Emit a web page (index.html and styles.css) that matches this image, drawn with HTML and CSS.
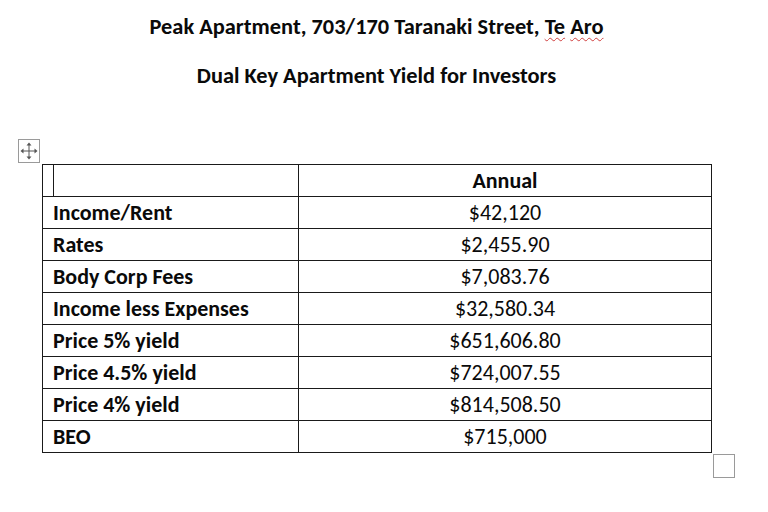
FILE: index.html
```html
<!DOCTYPE html>
<html>
<head>
<meta charset="utf-8">
<link rel="stylesheet" href="styles.css">
</head>
<body>
<div class="page">
  <div class="titles">
    <p class="title t1">Peak Apartment, 703/170 Taranaki Street, <span class="spell">Te</span> <span class="spell">Aro</span></p>
    <p class="title t2">Dual Key Apartment Yield for Investors</p>
  </div>
  <div class="handle">
    <svg width="20" height="22" viewBox="0 0 20 22">
      <g fill="none" stroke="#555" stroke-width="1">
        <line x1="10" y1="4" x2="10" y2="18"/>
        <line x1="3" y1="11" x2="17" y2="11"/>
      </g>
      <g fill="#555">
        <polygon points="10,2.5 7.5,5.5 12.5,5.5"/>
        <polygon points="10,19.5 7.5,16.5 12.5,16.5"/>
        <polygon points="1.5,11 4.5,8.5 4.5,13.5"/>
        <polygon points="18.5,11 15.5,8.5 15.5,13.5"/>
      </g>
    </svg>
  </div>
  <table class="yield">
    <tr class="head"><td class="label"><span class="marker"></span></td><td class="val b">Annual</td></tr>
    <tr><td class="label">Income/Rent</td><td class="val">$42,120</td></tr>
    <tr><td class="label">Rates</td><td class="val">$2,455.90</td></tr>
    <tr><td class="label">Body Corp Fees</td><td class="val">$7,083.76</td></tr>
    <tr><td class="label">Income less Expenses</td><td class="val">$32,580.34</td></tr>
    <tr><td class="label">Price 5% yield</td><td class="val">$651,606.80</td></tr>
    <tr><td class="label">Price 4.5% yield</td><td class="val">$724,007.55</td></tr>
    <tr><td class="label">Price 4% yield</td><td class="val">$814,508.50</td></tr>
    <tr><td class="label">BEO</td><td class="val">$715,000</td></tr>
  </table>
  <div class="resize-row"><div class="resize"></div></div>
</div>
</body>
</html>
```
FILE: styles.css
```css
html, body {
  margin: 0;
  padding: 0;
  background: #ffffff;
}
body {
  width: 768px;
  height: 512px;
  overflow: hidden;
  font-family: Carlito, Lato, "Open Sans", sans-serif;
  color: #0a0a0a;
}
.page {
  padding-top: 14px;
}
.titles {
  text-align: center;
  padding-right: 15px;
}
.title {
  margin: 0;
  font-weight: 700;
  font-size: 22.4px;
  line-height: 26px;
}
.t1 {
  margin-bottom: 23px;
}
.spell {
  text-decoration: underline wavy #d04040;
  text-decoration-thickness: 1px;
  text-underline-offset: 3px;
}
.handle {
  margin-top: 50px;
  margin-left: 18px;
  width: 22px;
  height: 24px;
  border: 1px solid #9a9a9a;
  box-sizing: border-box;
  display: flex;
}
.handle svg {
  width: 20px;
  height: 22px;
}
.yield {
  margin-left: 42px;
  margin-top: 1px;
  width: 670px;
  border-collapse: collapse;
  font-size: 22px;
}
.yield td {
  border: 1px solid #1a1a1a;
  height: 31px;
  padding: 0;
  line-height: 31px;
}
.yield .label {
  width: 245px;
  padding-left: 10px;
  font-weight: 700;
  position: relative;
}
.yield .val {
  text-align: center;
}
.yield .val.b {
  font-weight: 700;
}
.marker {
  position: absolute;
  left: 10px;
  top: 0;
  bottom: 0;
  border-left: 1px solid #1a1a1a;
}
.resize-row {
  display: flex;
  justify-content: flex-end;
  width: 735px;
  margin-top: 1px;
}
.resize {
  width: 22px;
  height: 24px;
  border: 1.5px solid #9a9a9a;
  box-sizing: border-box;
}
```
